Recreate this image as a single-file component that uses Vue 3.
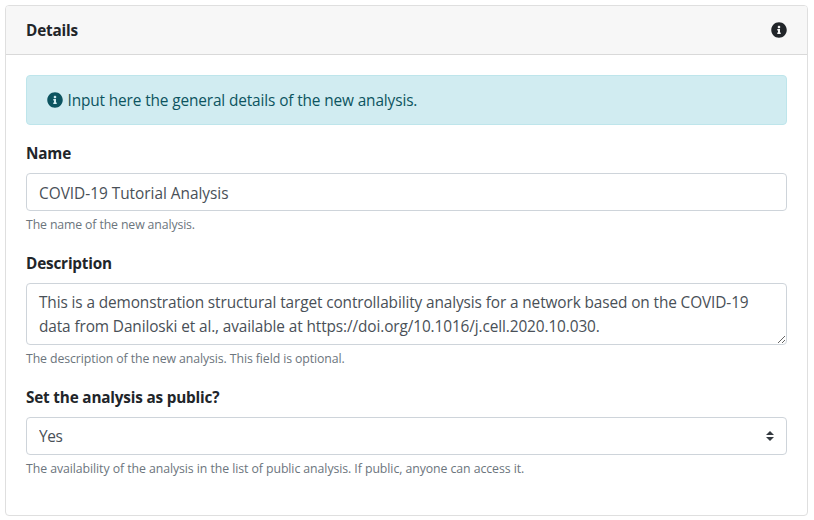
<script setup>
import { ref } from 'vue'

const name = ref('COVID-19 Tutorial Analysis')
const description = ref(
  'This is a demonstration structural target controllability analysis for a network based on the COVID-19\ndata from Daniloski et al., available at https://doi.org/10.1016/j.cell.2020.10.030.'
)
const isPublic = ref('Yes')
const infoPath =
  'M256 8C119.043 8 8 119.083 8 256c0 136.997 111.043 248 248 248s248-111.003 248-248C504 119.083 392.957 8 256 8zm0 110c23.196 0 42 18.804 42 42s-18.804 42-42 42-42-18.804-42-42 18.804-42 42-42zm56 254c0 6.627-5.373 12-12 12h-88c-6.627 0-12-5.373-12-12v-24c0-6.627 5.373-12 12-12h12v-64h-12c-6.627 0-12-5.373-12-12v-24c0-6.627 5.373-12 12-12h64c6.627 0 12 5.373 12 12v100h12c6.627 0 12 5.373 12 12v24z'
</script>

<template>
  <section class="card">
    <header class="card-header">
      <b class="title">Details</b>
      <svg class="icon" viewBox="0 0 512 512"><path :d="infoPath" /></svg>
    </header>
    <div class="card-body">
      <div class="alert">
        <svg class="icon" viewBox="0 0 512 512"><path :d="infoPath" /></svg>
        <span class="alert-text">Input here the general details of the new analysis.</span>
      </div>
      <div class="group">
        <label for="name">Name</label>
        <input id="name" v-model="name" class="control line" type="text" />
        <small>The name of the new analysis.</small>
      </div>
      <div class="group">
        <label for="description">Description</label>
        <textarea id="description" v-model="description" class="control area" rows="2" spellcheck="false"></textarea>
        <small class="h-desc">The description of the new analysis. This field is optional.</small>
      </div>
      <div class="group">
        <label for="public">Set the analysis as public?</label>
        <div class="select">
          <select id="public" v-model="isPublic" class="control choice">
            <option>Yes</option>
            <option>No</option>
          </select>
          <svg class="caret" viewBox="0 0 4 5"><path d="M2 0L0 2h4zm0 5L0 3h4z" /></svg>
        </div>
        <small class="h-public">The availability of the analysis in the list of public analysis. If public, anyone can access it.</small>
      </div>
    </div>
  </section>
</template>

<style>
body {
  background: #fff;
}
</style>

<style scoped>
* {
  box-sizing: border-box;
}
.card {
  width: 803px;
  height: 511px;
  margin: 5px;
  border: 1px solid #dfdfdf;
  border-radius: 4px;
  background: #fff;
  color: #212529;
  font: 15.4px/24px 'Segoe UI', 'Open Sans', 'Noto Sans', sans-serif;
  letter-spacing: -0.13px;
  overflow: hidden;
}
.card-header {
  display: flex;
  align-items: center;
  justify-content: space-between;
  height: 49px;
  padding: 0 20px;
  background: #f7f7f7;
  border-bottom: 1px solid #d9d9d9;
}
.title,
label {
  font-size: 15.3px;
  font-weight: 700;
  letter-spacing: -0.18px;
}
.icon {
  width: 16px;
  height: 16px;
  flex: none;
  fill: currentColor;
}
.card-body {
  padding: 20px;
}
.alert {
  display: flex;
  align-items: center;
  gap: 4.5px;
  height: 50px;
  margin-bottom: 16px;
  padding: 0 20px;
  border: 1px solid #bee5eb;
  border-radius: 4px;
  background: #d1ecf1;
  color: #0c5460;
}
.alert-text {
  padding-top: 2px;
}
.group {
  display: flex;
  flex-direction: column;
  align-items: stretch;
  margin-bottom: 16px;
}
label {
  margin-bottom: 8px;
}
.control {
  display: block;
  width: 100%;
  height: 38px;
  margin: 0;
  padding: 7px 12px 5px;
  border: 1px solid #ced4da;
  border-radius: 4px;
  outline: 0;
  background: #fff;
  color: #495057;
  font: inherit;
  letter-spacing: inherit;
  appearance: none;
}
.line {
  letter-spacing: -0.02px;
}
.area {
  height: 62px;
  letter-spacing: -0.115px;
  overflow: hidden;
  resize: vertical;
  white-space: pre;
}
.choice {
  letter-spacing: -0.4px;
}
.select {
  display: grid;
  align-items: center;
}
.select > * {
  grid-area: 1 / 1;
}
.caret {
  width: 8px;
  height: 10px;
  margin-right: 13px;
  justify-self: end;
  fill: #343a40;
  pointer-events: none;
}
small {
  margin-top: 4px;
  color: #6c757d;
  font-size: 12.3px;
  line-height: 20px;
}
.h-desc {
  letter-spacing: -0.1px;
}
.h-public {
  letter-spacing: -0.07px;
}
</style>
